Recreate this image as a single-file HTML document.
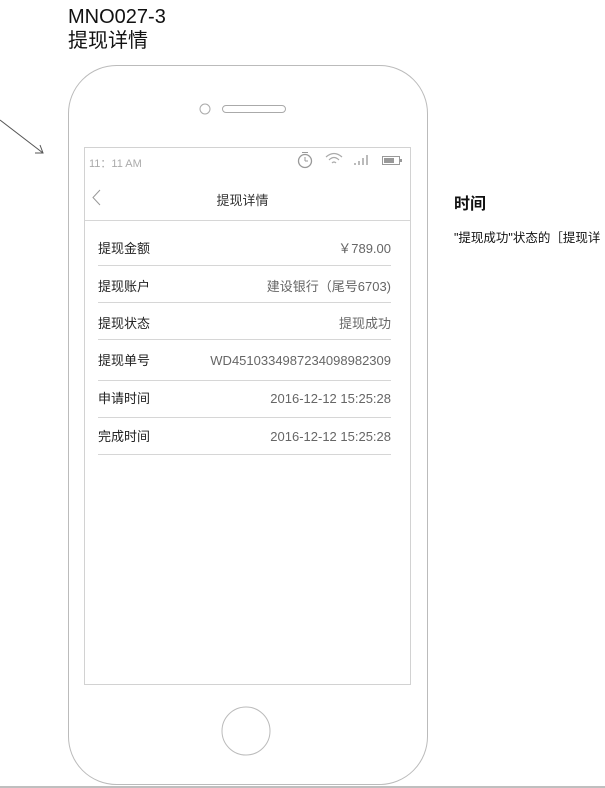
<!DOCTYPE html>
<html><head><meta charset="utf-8"><style>
body{margin:0;width:605px;height:788px;position:relative;background:#fff;font-family:"Liberation Sans","Noto Sans CJK SC",sans-serif;overflow:hidden}
.a{position:absolute}
.row{position:absolute;left:98px;width:293px;border-bottom:1px solid #d6d6d6;font-size:13px;color:#222}
.row span,.row b{position:absolute;top:0;line-height:16px;height:16px;white-space:nowrap}
.row span{right:0;color:#666}
.row b{font-weight:normal;left:0}
</style></head><body>
<div class="a" style="left:68px;top:5px;font-size:20px;color:#111;line-height:24px">MNO027-3<br>提现详情</div>
<svg class="a" style="left:0;top:0" width="605" height="788">
<line x1="0" y1="120" x2="43" y2="153" stroke="#555" stroke-width="1"/>
<polyline points="35,153 43,153 40,145" fill="none" stroke="#555"/>
<rect x="68.5" y="65.5" width="359" height="719" rx="48" fill="none" stroke="#bbb"/>
<circle cx="205" cy="109" r="5" fill="none" stroke="#aaa"/>
<rect x="222.5" y="105.5" width="63" height="7" rx="3.5" fill="none" stroke="#aaa"/>
<rect x="84.5" y="147.5" width="326" height="537" fill="none" stroke="#d2d2d2"/>
<line x1="85" y1="220.5" x2="410" y2="220.5" stroke="#d6d6d6"/>
<circle cx="246" cy="731" r="24" fill="none" stroke="#bbb"/>
<line x1="0" y1="787" x2="605" y2="787" stroke="#aaa" stroke-width="1.5"/>
<polyline points="100,190 93,197.5 100,205" fill="none" stroke="#999"/>
<circle cx="305" cy="161" r="6.5" fill="none" stroke="#999" stroke-width="1.3"/>
<line x1="305" y1="157" x2="305" y2="161" stroke="#999"/><line x1="305" y1="161" x2="308" y2="161" stroke="#999"/>
<line x1="302" y1="152.5" x2="308" y2="152.5" stroke="#999"/>
<path d="M326 157 Q334 150 342 157 M329 160 Q334 155 339 160 M332 163 Q334 161 336 163" fill="none" stroke="#aaa" stroke-width="1.2"/>
<g fill="#bbb"><rect x="354" y="163" width="2" height="2"/><rect x="358" y="161" width="2" height="4"/><rect x="362" y="158" width="2" height="7"/><rect x="366" y="155" width="2" height="10"/></g>
<rect x="382.5" y="156.5" width="17" height="8" fill="none" stroke="#999"/><rect x="384" y="158" width="10" height="5" fill="#999"/><rect x="400" y="159" width="2" height="3" fill="#999"/>
</svg>
<div class="a" style="left:89px;top:155px;font-size:11px;color:#aaa">11：11 AM</div>
<div class="a" style="left:0;width:485px;text-align:center;top:190px;font-size:13px;color:#333">提现详情</div>
<div class="row" style="top:241px;height:24px"><b>提现金额</b><span>￥789.00</span></div>
<div class="row" style="top:279px;height:23px"><b>提现账户</b><span>建设银行（尾号6703)</span></div>
<div class="row" style="top:316px;height:23px"><b>提现状态</b><span>提现成功</span></div>
<div class="row" style="top:353px;height:27px"><b>提现单号</b><span>WD4510334987234098982309</span></div>
<div class="row" style="top:391px;height:26px"><b>申请时间</b><span>2016-12-12 15:25:28</span></div>
<div class="row" style="top:429px;height:25px"><b>完成时间</b><span>2016-12-12 15:25:28</span></div>
<div class="a" style="left:454px;top:190px;font-size:16px;font-weight:bold;color:#111">时间</div>
<div class="a" style="left:454px;top:227px;font-size:12.5px;color:#111;white-space:nowrap">"提现成功"状态的［提现详</div>
</body></html>
